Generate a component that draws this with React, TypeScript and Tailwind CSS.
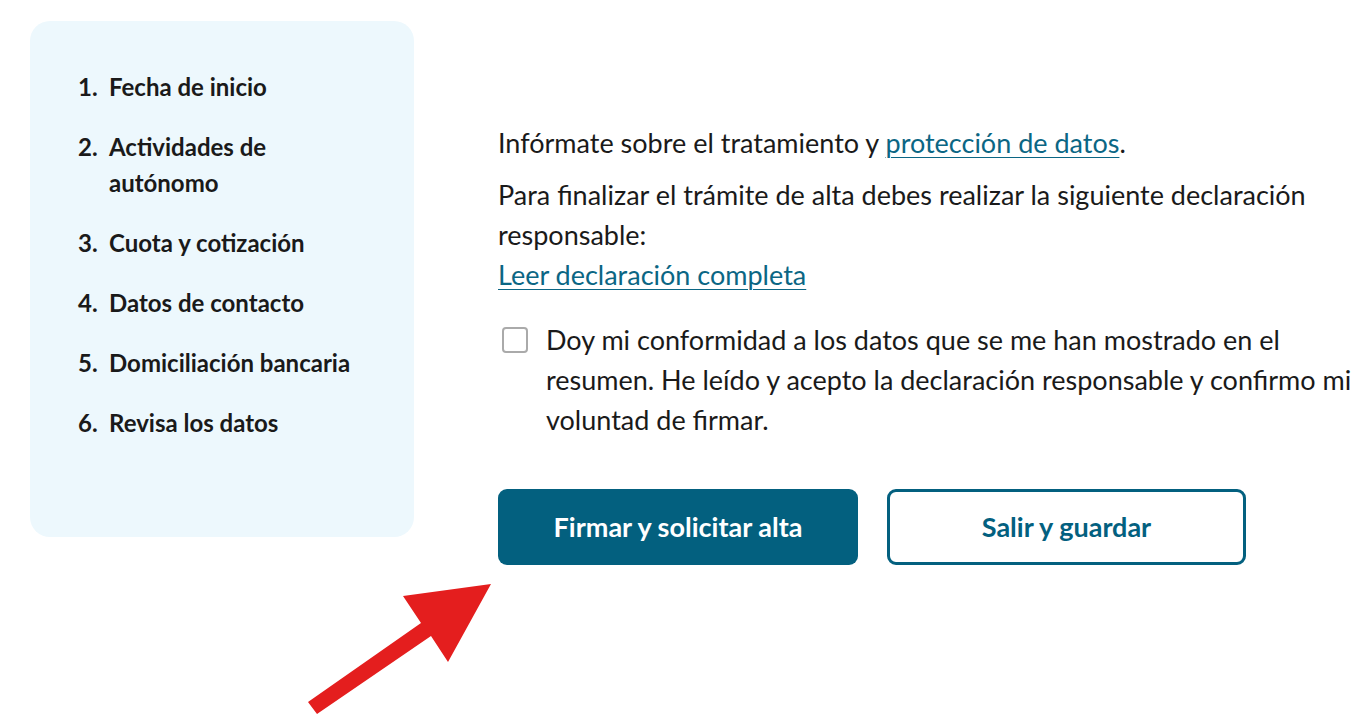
import React from "react";

const steps = [
  "Fecha de inicio",
  "Actividades de autónomo",
  "Cuota y cotización",
  "Datos de contacto",
  "Domiciliación bancaria",
  "Revisa los datos",
];

function Arrow() {
  return (
    <svg
      className="pointer-events-none absolute left-0 top-0"
      width="1367"
      height="715"
      viewBox="0 0 1367 715"
    >
      <polygon
        points="491,584 403,596 421,623 308,702 317,714 431,636 448,662"
        fill="#e41e1e"
      />
    </svg>
  );
}

export default function App() {
  return (
    <div
      className="relative min-h-[715px] w-[1367px] overflow-hidden bg-white text-[#1a1a1a]"
      style={{ fontFamily: "Lato, 'Open Sans', sans-serif" }}
    >
      <div className="flex items-start gap-[84px] pl-[30px] pt-[21px]">
        <nav className="h-[516px] w-[384px] shrink-0 rounded-[20px] bg-[#edf8fd] pl-[48px] pr-6 pt-[48px]">
          <ol className="flex flex-col gap-6">
            {steps.map((s, i) => (
              <li key={s} className="flex text-[24px] font-bold leading-[36px]">
                <span className="w-[31px] shrink-0">{i + 1}.</span>
                <span className="max-w-[252px]">{s}</span>
              </li>
            ))}
          </ol>
        </nav>

        <main className="w-[862px] pt-[102px] text-[27px] leading-[40px]">
          <p>
            Infórmate sobre el tratamiento y{" "}
            <a href="#" className="text-[#0b6684] underline underline-offset-4 decoration-1">
              protección de datos
            </a>
            .
          </p>
          <p className="mt-3">
            Para finalizar el trámite de alta debes realizar la siguiente declaración
            responsable:
            <br />
            <a href="#" className="text-[#0b6684] underline underline-offset-4 decoration-1">
              Leer declaración completa
            </a>
          </p>

          <label className="mt-[25px] flex gap-[18px]">
            <span className="mt-[7px] ml-1 h-[26px] w-[26px] shrink-0 rounded-[4px] border-2 border-[#aaaaaa] bg-white" />
            <span>
              Doy mi conformidad a los datos que se me han mostrado en el resumen. He
              leído y acepto la declaración responsable y confirmo mi voluntad de
              firmar.
            </span>
          </label>

          <div className="mt-[49px] flex gap-[29px]">
            <button className="h-[76px] w-[360px] rounded-[9px] bg-[#03607f] text-[27px] font-bold text-white">
              Firmar y solicitar alta
            </button>
            <button className="h-[76px] w-[359px] rounded-[9px] border-[3px] border-[#03607f] bg-white text-[27px] font-bold text-[#03607f]">
              Salir y guardar
            </button>
          </div>
        </main>
      </div>
      <Arrow />
    </div>
  );
}
